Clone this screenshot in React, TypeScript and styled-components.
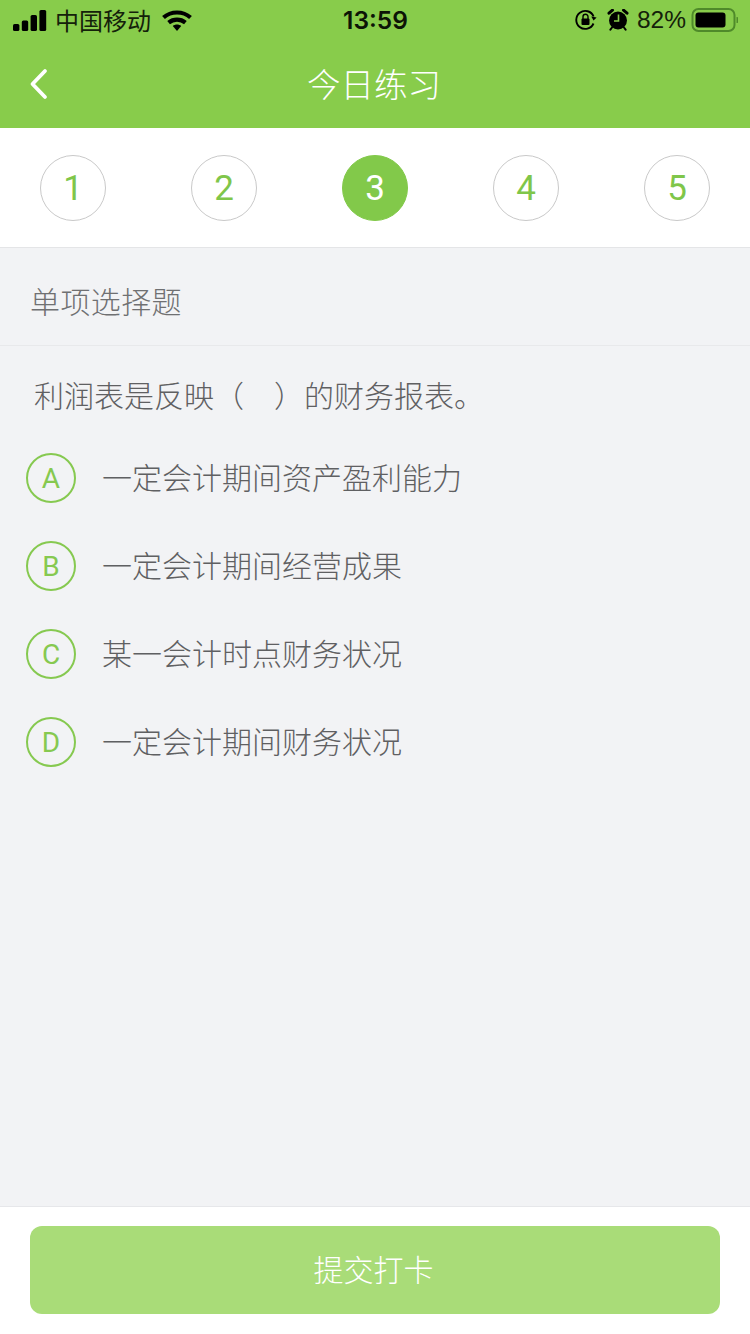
import React from 'react'
import styled, { createGlobalStyle } from 'styled-components'

const SANS = `"Liberation Sans", "Noto Sans CJK SC", sans-serif`
const DIGITS = `Roboto, "Liberation Sans", sans-serif`
const GREEN = '#88cc4b'

const steps = [1, 2, 3, 4, 5]
const options = [
  { key: 'A', text: '一定会计期间资产盈利能力' },
  { key: 'B', text: '一定会计期间经营成果' },
  { key: 'C', text: '某一会计时点财务状况' },
  { key: 'D', text: '一定会计期间财务状况' },
]

export default function App() {
  return (
    <>
      <GlobalStyle />
      <Page>
        <Header>
          <StatusBar>
            <StatusLeft>
              <SignalIcon />
              <Carrier>中国移动</Carrier>
              <WifiIcon />
            </StatusLeft>
            <Time>13:59</Time>
            <StatusRight>
              <LockIcon />
              <AlarmIcon />
              <Percent>82%</Percent>
              <BatteryIcon />
            </StatusRight>
          </StatusBar>
          <NavBar>
            <BackButton aria-label="back">
              <svg width="22" height="36" viewBox="0 0 22 36" fill="none">
                <path d="M17 5 L4.5 18 L17 31" stroke="#fff" strokeWidth="3.8" strokeLinecap="round" strokeLinejoin="round" />
              </svg>
            </BackButton>
            <NavTitle>今日练习</NavTitle>
          </NavBar>
        </Header>

        <Steps>
          {steps.map((n) => (
            <Step key={n} $active={n === 3}>{n}</Step>
          ))}
        </Steps>

        <SectionLabel>单项选择题</SectionLabel>

        <Main>
          <Question>
            利润表是反映（<Blank />）的财务报表。
          </Question>
          <OptionList>
            {options.map((o) => (
              <Option key={o.key}>
                <OptionKey>{o.key}</OptionKey>
                <OptionText>{o.text}</OptionText>
              </Option>
            ))}
          </OptionList>
        </Main>

        <Footer>
          <SubmitButton>提交打卡</SubmitButton>
        </Footer>
      </Page>
    </>
  )
}

function SignalIcon() {
  return (
    <svg width="34" height="21" viewBox="0 0 34 21" fill="#000">
      <rect x="0" y="14" width="6.4" height="7" rx="1.6" />
      <rect x="8.8" y="10.5" width="6.4" height="10.5" rx="1.6" />
      <rect x="17.6" y="5" width="6.4" height="16" rx="1.6" />
      <rect x="26.4" y="0" width="6.8" height="21" rx="1.6" />
    </svg>
  )
}

function WifiIcon() {
  return (
    <svg width="30" height="21" viewBox="0 0 30 21" fill="none" stroke="#000" strokeWidth="4.2">
      <path d="M1.5 7.5 C9 0.8 21 0.8 28.5 7.5" />
      <path d="M6.6 12.6 C11.4 8.6 18.6 8.6 23.4 12.6" />
      <path d="M10.8 16 L15 21 L19.2 16 C17 14 13 14 10.8 16 Z" fill="#000" stroke="none" />
    </svg>
  )
}

function LockIcon() {
  return (
    <svg width="22" height="22" viewBox="0 0 22 22" fill="none">
      <path d="M18.5 14.5 A9 9 0 1 1 18.6 7.5" stroke="#000" strokeWidth="1.9" />
      <path d="M16 8 L21.5 8 L19 11.5 Z" fill="#000" transform="rotate(10 19 9)" />
      <rect x="6.5" y="9.5" width="8" height="6.5" rx="1" fill="#000" />
      <path d="M8 10 V7.8 a2.5 2.5 0 0 1 5 0 V10" stroke="#000" strokeWidth="1.4" />
    </svg>
  )
}

function AlarmIcon() {
  return (
    <svg width="22" height="22" viewBox="0 0 22 22" fill="none">
      <circle cx="11" cy="11.5" r="9" fill="#000" />
      <path d="M2 4.2 L5.5 1.2 M20 4.2 L16.5 1.2" stroke="#000" strokeWidth="3" strokeLinecap="round" />
      <path d="M5 18.5 L3.4 20.6 M17 18.5 L18.6 20.6" stroke="#000" strokeWidth="2" strokeLinecap="round" />
      <path d="M11.5 5.5 V12 H7" stroke={GREEN} strokeWidth="1.6" />
    </svg>
  )
}

function BatteryIcon() {
  return (
    <svg width="47" height="24" viewBox="0 0 47 24" fill="none">
      <rect x="1.5" y="1" width="42" height="22" rx="6" stroke="#4f8a2a" strokeWidth="2" />
      <rect x="4.5" y="4.5" width="30" height="15" rx="3" fill="#000" />
      <path d="M45.5 9 a3 3 0 0 1 0 6 Z" fill="#4f8a2a" />
    </svg>
  )
}

const GlobalStyle = createGlobalStyle`
  html, body {
    margin: 0;
    padding: 0;
    background: #f2f3f5;
  }
  * {
    box-sizing: border-box;
  }
`

const Page = styled.div`
  width: 750px;
  height: 1334px;
  display: flex;
  flex-direction: column;
  font-family: ${SANS};
  background: #f2f3f5;
  overflow: hidden;
`

const Header = styled.header`
  height: 128px;
  background: ${GREEN};
  display: flex;
  flex-direction: column;
`

const StatusBar = styled.div`
  height: 40px;
  padding: 0 12px 0 13px;
  display: grid;
  grid-template-columns: 1fr auto 1fr;
  align-items: center;
  color: #000;
`

const StatusLeft = styled.div`
  display: flex;
  align-items: center;
  gap: 8px;
`

const Carrier = styled.span`
  font-size: 24px;
  line-height: 28px;
  margin: 3px 3px 0 0;
  color: #14210a;
`

const Time = styled.span`
  font-family: Inter, "Liberation Sans", sans-serif;
  font-size: 24.5px;
  font-weight: 600;
  color: #0c1406;
`

const StatusRight = styled.div`
  display: flex;
  align-items: center;
  justify-content: flex-end;
  gap: 10px;
`

const Percent = styled.span`
  font-size: 24.5px;
  margin: 0 -5px 0 -2px;
  color: #14210a;
`

const NavBar = styled.div`
  height: 88px;
  padding: 0 28px 4px;
  position: relative;
  display: flex;
  align-items: center;
  justify-content: center;
`

const BackButton = styled.div`
  position: absolute;
  left: 28px;
  top: 26px;
  line-height: 0;
`

const NavTitle = styled.h1`
  margin: 0 2px 0 0;
  font-size: 33.5px;
  font-weight: 300;
  color: #fff;
`

const Steps = styled.div`
  height: 120px;
  padding: 0 40px;
  background: #fff;
  border-bottom: 1px solid #e4e5e7;
  display: flex;
  align-items: center;
  justify-content: space-between;
`

const Step = styled.div<{ $active?: boolean }>`
  width: 66px;
  height: 66px;
  padding-top: 2px;
  border-radius: 50%;
  border: 1px solid ${(p) => (p.$active ? '#82c94a' : '#c9c9c9')};
  background: ${(p) => (p.$active ? '#82c94a' : '#fff')};
  color: ${(p) => (p.$active ? '#fff' : '#7fc64a')};
  font-family: ${DIGITS};
  font-size: 35px;
  font-weight: 400;
  display: flex;
  align-items: center;
  justify-content: center;
`

const SectionLabel = styled.div`
  height: 98px;
  padding: 6px 30px 0;
  border-bottom: 1px solid #e8e9eb;
  font-size: 30px;
  font-weight: 300;
  letter-spacing: 0.4px;
  color: #6f7072;
  display: flex;
  align-items: center;
`

const Main = styled.main`
  flex: 1;
  padding: 29px 0 0 26px;
`

const Question = styled.p`
  margin: 0 0 0 8px;
  font-size: 30px;
  font-weight: 300;
  line-height: 44px;
  color: #5f6062;
`

const Blank = styled.span`
  display: inline-block;
  width: 30px;
`

const OptionList = styled.div`
  margin-top: 34px;
  display: flex;
  flex-direction: column;
  gap: 38px;
`

const Option = styled.div`
  height: 50px;
  display: flex;
  align-items: center;
  gap: 26px;
`

const OptionKey = styled.div`
  width: 50px;
  height: 50px;
  border-radius: 50%;
  border: 2px solid #86c950;
  color: #86c950;
  font-family: ${DIGITS};
  font-size: 28px;
  font-weight: 400;
  display: flex;
  align-items: center;
  justify-content: center;
`

const OptionText = styled.span`
  font-size: 30px;
  font-weight: 300;
  color: #5f6062;
  position: relative;
  top: -2px;
`

const Footer = styled.footer`
  height: 128px;
  padding: 19px 30px 20px;
  background: #fff;
  border-top: 1px solid #e6e7ea;
`

const SubmitButton = styled.button`
  width: 100%;
  height: 88px;
  padding: 0 3px 4px 0;
  border: 0;
  border-radius: 12px;
  background: #a9dc78;
  color: #fff;
  font-family: ${SANS};
  font-size: 30px;
  font-weight: 300;
`
